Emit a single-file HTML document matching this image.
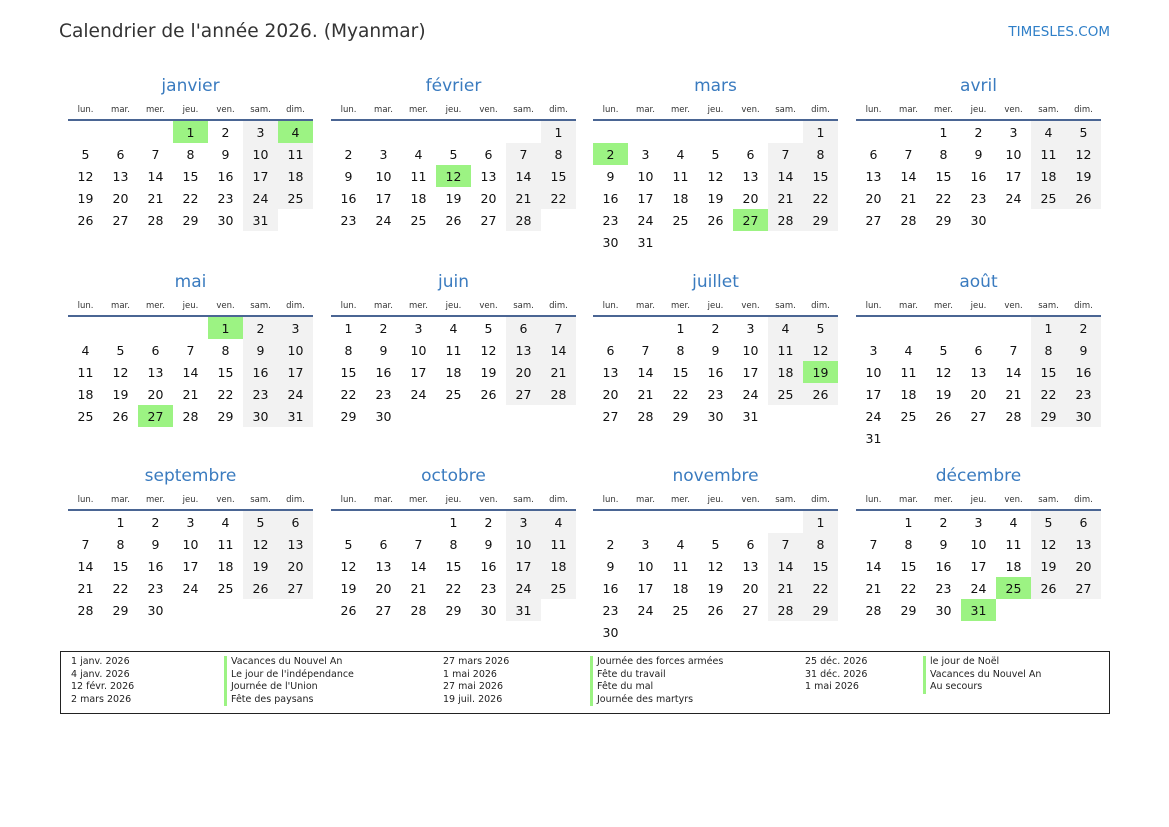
<!DOCTYPE html>
<html><head><meta charset="utf-8"><style>
body{margin:0;width:1169px;height:827px;background:#fff;position:relative;font-family:"DejaVu Sans","Liberation Sans",sans-serif;color:#111;overflow:hidden}
.h1{position:absolute;left:59px;top:21px;font-size:18.6px;color:#333}
.site{position:absolute;right:59px;top:24px;font-size:13.5px;color:#2f7fc8}
.m{position:absolute;width:245px}
.t{height:30px;line-height:32px;text-align:center;font-size:17px;color:#3a7bbf}
table{border-collapse:collapse;table-layout:fixed;width:245px}
th{height:19px;font-size:8.5px;font-weight:normal;color:#333;border-bottom:2px solid #4a6593;padding:0;vertical-align:middle}
td{width:35px;height:22px;padding:0;text-align:center;font-size:12.5px}
td:nth-child(n+6):not(:empty){background:#f2f2f2}
td.h,td.h:nth-child(n+6){background:#9cf383}
.lg{position:absolute;left:60px;top:651px;width:1048px;height:61px;border:1px solid #222}
.lg div{position:absolute;font-size:9.5px;line-height:12.6px;color:#222;top:4px;white-space:nowrap}
.b{border-left:3px solid #9cf383;padding-left:4px}
</style></head><body>
<div class="h1">Calendrier de l'année 2026. (Myanmar)</div>
<div class="site">TIMESLES.COM</div>

<div class="m" style="left:68px;top:70px"><div class="t">janvier</div><table><tr><th>lun.</th><th>mar.</th><th>mer.</th><th>jeu.</th><th>ven.</th><th>sam.</th><th>dim.</th></tr>
<tr><td></td><td></td><td></td><td class="h">1</td><td>2</td><td>3</td><td class="h">4</td></tr>
<tr><td>5</td><td>6</td><td>7</td><td>8</td><td>9</td><td>10</td><td>11</td></tr>
<tr><td>12</td><td>13</td><td>14</td><td>15</td><td>16</td><td>17</td><td>18</td></tr>
<tr><td>19</td><td>20</td><td>21</td><td>22</td><td>23</td><td>24</td><td>25</td></tr>
<tr><td>26</td><td>27</td><td>28</td><td>29</td><td>30</td><td>31</td><td></td></tr></table></div>

<div class="m" style="left:331px;top:70px"><div class="t">février</div><table><tr><th>lun.</th><th>mar.</th><th>mer.</th><th>jeu.</th><th>ven.</th><th>sam.</th><th>dim.</th></tr>
<tr><td></td><td></td><td></td><td></td><td></td><td></td><td>1</td></tr>
<tr><td>2</td><td>3</td><td>4</td><td>5</td><td>6</td><td>7</td><td>8</td></tr>
<tr><td>9</td><td>10</td><td>11</td><td class="h">12</td><td>13</td><td>14</td><td>15</td></tr>
<tr><td>16</td><td>17</td><td>18</td><td>19</td><td>20</td><td>21</td><td>22</td></tr>
<tr><td>23</td><td>24</td><td>25</td><td>26</td><td>27</td><td>28</td><td></td></tr></table></div>

<div class="m" style="left:593px;top:70px"><div class="t">mars</div><table><tr><th>lun.</th><th>mar.</th><th>mer.</th><th>jeu.</th><th>ven.</th><th>sam.</th><th>dim.</th></tr>
<tr><td></td><td></td><td></td><td></td><td></td><td></td><td>1</td></tr>
<tr><td class="h">2</td><td>3</td><td>4</td><td>5</td><td>6</td><td>7</td><td>8</td></tr>
<tr><td>9</td><td>10</td><td>11</td><td>12</td><td>13</td><td>14</td><td>15</td></tr>
<tr><td>16</td><td>17</td><td>18</td><td>19</td><td>20</td><td>21</td><td>22</td></tr>
<tr><td>23</td><td>24</td><td>25</td><td>26</td><td class="h">27</td><td>28</td><td>29</td></tr>
<tr><td>30</td><td>31</td><td></td><td></td><td></td><td></td><td></td></tr></table></div>

<div class="m" style="left:856px;top:70px"><div class="t">avril</div><table><tr><th>lun.</th><th>mar.</th><th>mer.</th><th>jeu.</th><th>ven.</th><th>sam.</th><th>dim.</th></tr>
<tr><td></td><td></td><td>1</td><td>2</td><td>3</td><td>4</td><td>5</td></tr>
<tr><td>6</td><td>7</td><td>8</td><td>9</td><td>10</td><td>11</td><td>12</td></tr>
<tr><td>13</td><td>14</td><td>15</td><td>16</td><td>17</td><td>18</td><td>19</td></tr>
<tr><td>20</td><td>21</td><td>22</td><td>23</td><td>24</td><td>25</td><td>26</td></tr>
<tr><td>27</td><td>28</td><td>29</td><td>30</td><td></td><td></td><td></td></tr></table></div>

<div class="m" style="left:68px;top:266px"><div class="t">mai</div><table><tr><th>lun.</th><th>mar.</th><th>mer.</th><th>jeu.</th><th>ven.</th><th>sam.</th><th>dim.</th></tr>
<tr><td></td><td></td><td></td><td></td><td class="h">1</td><td>2</td><td>3</td></tr>
<tr><td>4</td><td>5</td><td>6</td><td>7</td><td>8</td><td>9</td><td>10</td></tr>
<tr><td>11</td><td>12</td><td>13</td><td>14</td><td>15</td><td>16</td><td>17</td></tr>
<tr><td>18</td><td>19</td><td>20</td><td>21</td><td>22</td><td>23</td><td>24</td></tr>
<tr><td>25</td><td>26</td><td class="h">27</td><td>28</td><td>29</td><td>30</td><td>31</td></tr></table></div>

<div class="m" style="left:331px;top:266px"><div class="t">juin</div><table><tr><th>lun.</th><th>mar.</th><th>mer.</th><th>jeu.</th><th>ven.</th><th>sam.</th><th>dim.</th></tr>
<tr><td>1</td><td>2</td><td>3</td><td>4</td><td>5</td><td>6</td><td>7</td></tr>
<tr><td>8</td><td>9</td><td>10</td><td>11</td><td>12</td><td>13</td><td>14</td></tr>
<tr><td>15</td><td>16</td><td>17</td><td>18</td><td>19</td><td>20</td><td>21</td></tr>
<tr><td>22</td><td>23</td><td>24</td><td>25</td><td>26</td><td>27</td><td>28</td></tr>
<tr><td>29</td><td>30</td><td></td><td></td><td></td><td></td><td></td></tr></table></div>

<div class="m" style="left:593px;top:266px"><div class="t">juillet</div><table><tr><th>lun.</th><th>mar.</th><th>mer.</th><th>jeu.</th><th>ven.</th><th>sam.</th><th>dim.</th></tr>
<tr><td></td><td></td><td>1</td><td>2</td><td>3</td><td>4</td><td>5</td></tr>
<tr><td>6</td><td>7</td><td>8</td><td>9</td><td>10</td><td>11</td><td>12</td></tr>
<tr><td>13</td><td>14</td><td>15</td><td>16</td><td>17</td><td>18</td><td class="h">19</td></tr>
<tr><td>20</td><td>21</td><td>22</td><td>23</td><td>24</td><td>25</td><td>26</td></tr>
<tr><td>27</td><td>28</td><td>29</td><td>30</td><td>31</td><td></td><td></td></tr></table></div>

<div class="m" style="left:856px;top:266px"><div class="t">août</div><table><tr><th>lun.</th><th>mar.</th><th>mer.</th><th>jeu.</th><th>ven.</th><th>sam.</th><th>dim.</th></tr>
<tr><td></td><td></td><td></td><td></td><td></td><td>1</td><td>2</td></tr>
<tr><td>3</td><td>4</td><td>5</td><td>6</td><td>7</td><td>8</td><td>9</td></tr>
<tr><td>10</td><td>11</td><td>12</td><td>13</td><td>14</td><td>15</td><td>16</td></tr>
<tr><td>17</td><td>18</td><td>19</td><td>20</td><td>21</td><td>22</td><td>23</td></tr>
<tr><td>24</td><td>25</td><td>26</td><td>27</td><td>28</td><td>29</td><td>30</td></tr>
<tr><td>31</td><td></td><td></td><td></td><td></td><td></td><td></td></tr></table></div>

<div class="m" style="left:68px;top:460px"><div class="t">septembre</div><table><tr><th>lun.</th><th>mar.</th><th>mer.</th><th>jeu.</th><th>ven.</th><th>sam.</th><th>dim.</th></tr>
<tr><td></td><td>1</td><td>2</td><td>3</td><td>4</td><td>5</td><td>6</td></tr>
<tr><td>7</td><td>8</td><td>9</td><td>10</td><td>11</td><td>12</td><td>13</td></tr>
<tr><td>14</td><td>15</td><td>16</td><td>17</td><td>18</td><td>19</td><td>20</td></tr>
<tr><td>21</td><td>22</td><td>23</td><td>24</td><td>25</td><td>26</td><td>27</td></tr>
<tr><td>28</td><td>29</td><td>30</td><td></td><td></td><td></td><td></td></tr></table></div>

<div class="m" style="left:331px;top:460px"><div class="t">octobre</div><table><tr><th>lun.</th><th>mar.</th><th>mer.</th><th>jeu.</th><th>ven.</th><th>sam.</th><th>dim.</th></tr>
<tr><td></td><td></td><td></td><td>1</td><td>2</td><td>3</td><td>4</td></tr>
<tr><td>5</td><td>6</td><td>7</td><td>8</td><td>9</td><td>10</td><td>11</td></tr>
<tr><td>12</td><td>13</td><td>14</td><td>15</td><td>16</td><td>17</td><td>18</td></tr>
<tr><td>19</td><td>20</td><td>21</td><td>22</td><td>23</td><td>24</td><td>25</td></tr>
<tr><td>26</td><td>27</td><td>28</td><td>29</td><td>30</td><td>31</td><td></td></tr></table></div>

<div class="m" style="left:593px;top:460px"><div class="t">novembre</div><table><tr><th>lun.</th><th>mar.</th><th>mer.</th><th>jeu.</th><th>ven.</th><th>sam.</th><th>dim.</th></tr>
<tr><td></td><td></td><td></td><td></td><td></td><td></td><td>1</td></tr>
<tr><td>2</td><td>3</td><td>4</td><td>5</td><td>6</td><td>7</td><td>8</td></tr>
<tr><td>9</td><td>10</td><td>11</td><td>12</td><td>13</td><td>14</td><td>15</td></tr>
<tr><td>16</td><td>17</td><td>18</td><td>19</td><td>20</td><td>21</td><td>22</td></tr>
<tr><td>23</td><td>24</td><td>25</td><td>26</td><td>27</td><td>28</td><td>29</td></tr>
<tr><td>30</td><td></td><td></td><td></td><td></td><td></td><td></td></tr></table></div>

<div class="m" style="left:856px;top:460px"><div class="t">décembre</div><table><tr><th>lun.</th><th>mar.</th><th>mer.</th><th>jeu.</th><th>ven.</th><th>sam.</th><th>dim.</th></tr>
<tr><td></td><td>1</td><td>2</td><td>3</td><td>4</td><td>5</td><td>6</td></tr>
<tr><td>7</td><td>8</td><td>9</td><td>10</td><td>11</td><td>12</td><td>13</td></tr>
<tr><td>14</td><td>15</td><td>16</td><td>17</td><td>18</td><td>19</td><td>20</td></tr>
<tr><td>21</td><td>22</td><td>23</td><td>24</td><td class="h">25</td><td>26</td><td>27</td></tr>
<tr><td>28</td><td>29</td><td>30</td><td class="h">31</td><td></td><td></td><td></td></tr></table></div>

<div class="lg">
<div style="left:10px">1 janv. 2026<br>4 janv. 2026<br>12 févr. 2026<br>2 mars 2026</div>
<div class="b" style="left:163px">Vacances du Nouvel An<br>Le jour de l'indépendance<br>Journée de l'Union<br>Fête des paysans</div>
<div style="left:382px">27 mars 2026<br>1 mai 2026<br>27 mai 2026<br>19 juil. 2026</div>
<div class="b" style="left:529px">Journée des forces armées<br>Fête du travail<br>Fête du mal<br>Journée des martyrs</div>
<div style="left:744px">25 déc. 2026<br>31 déc. 2026<br>1 mai 2026</div>
<div class="b" style="left:862px">le jour de Noël<br>Vacances du Nouvel An<br>Au secours</div>
</div>
</body></html>
